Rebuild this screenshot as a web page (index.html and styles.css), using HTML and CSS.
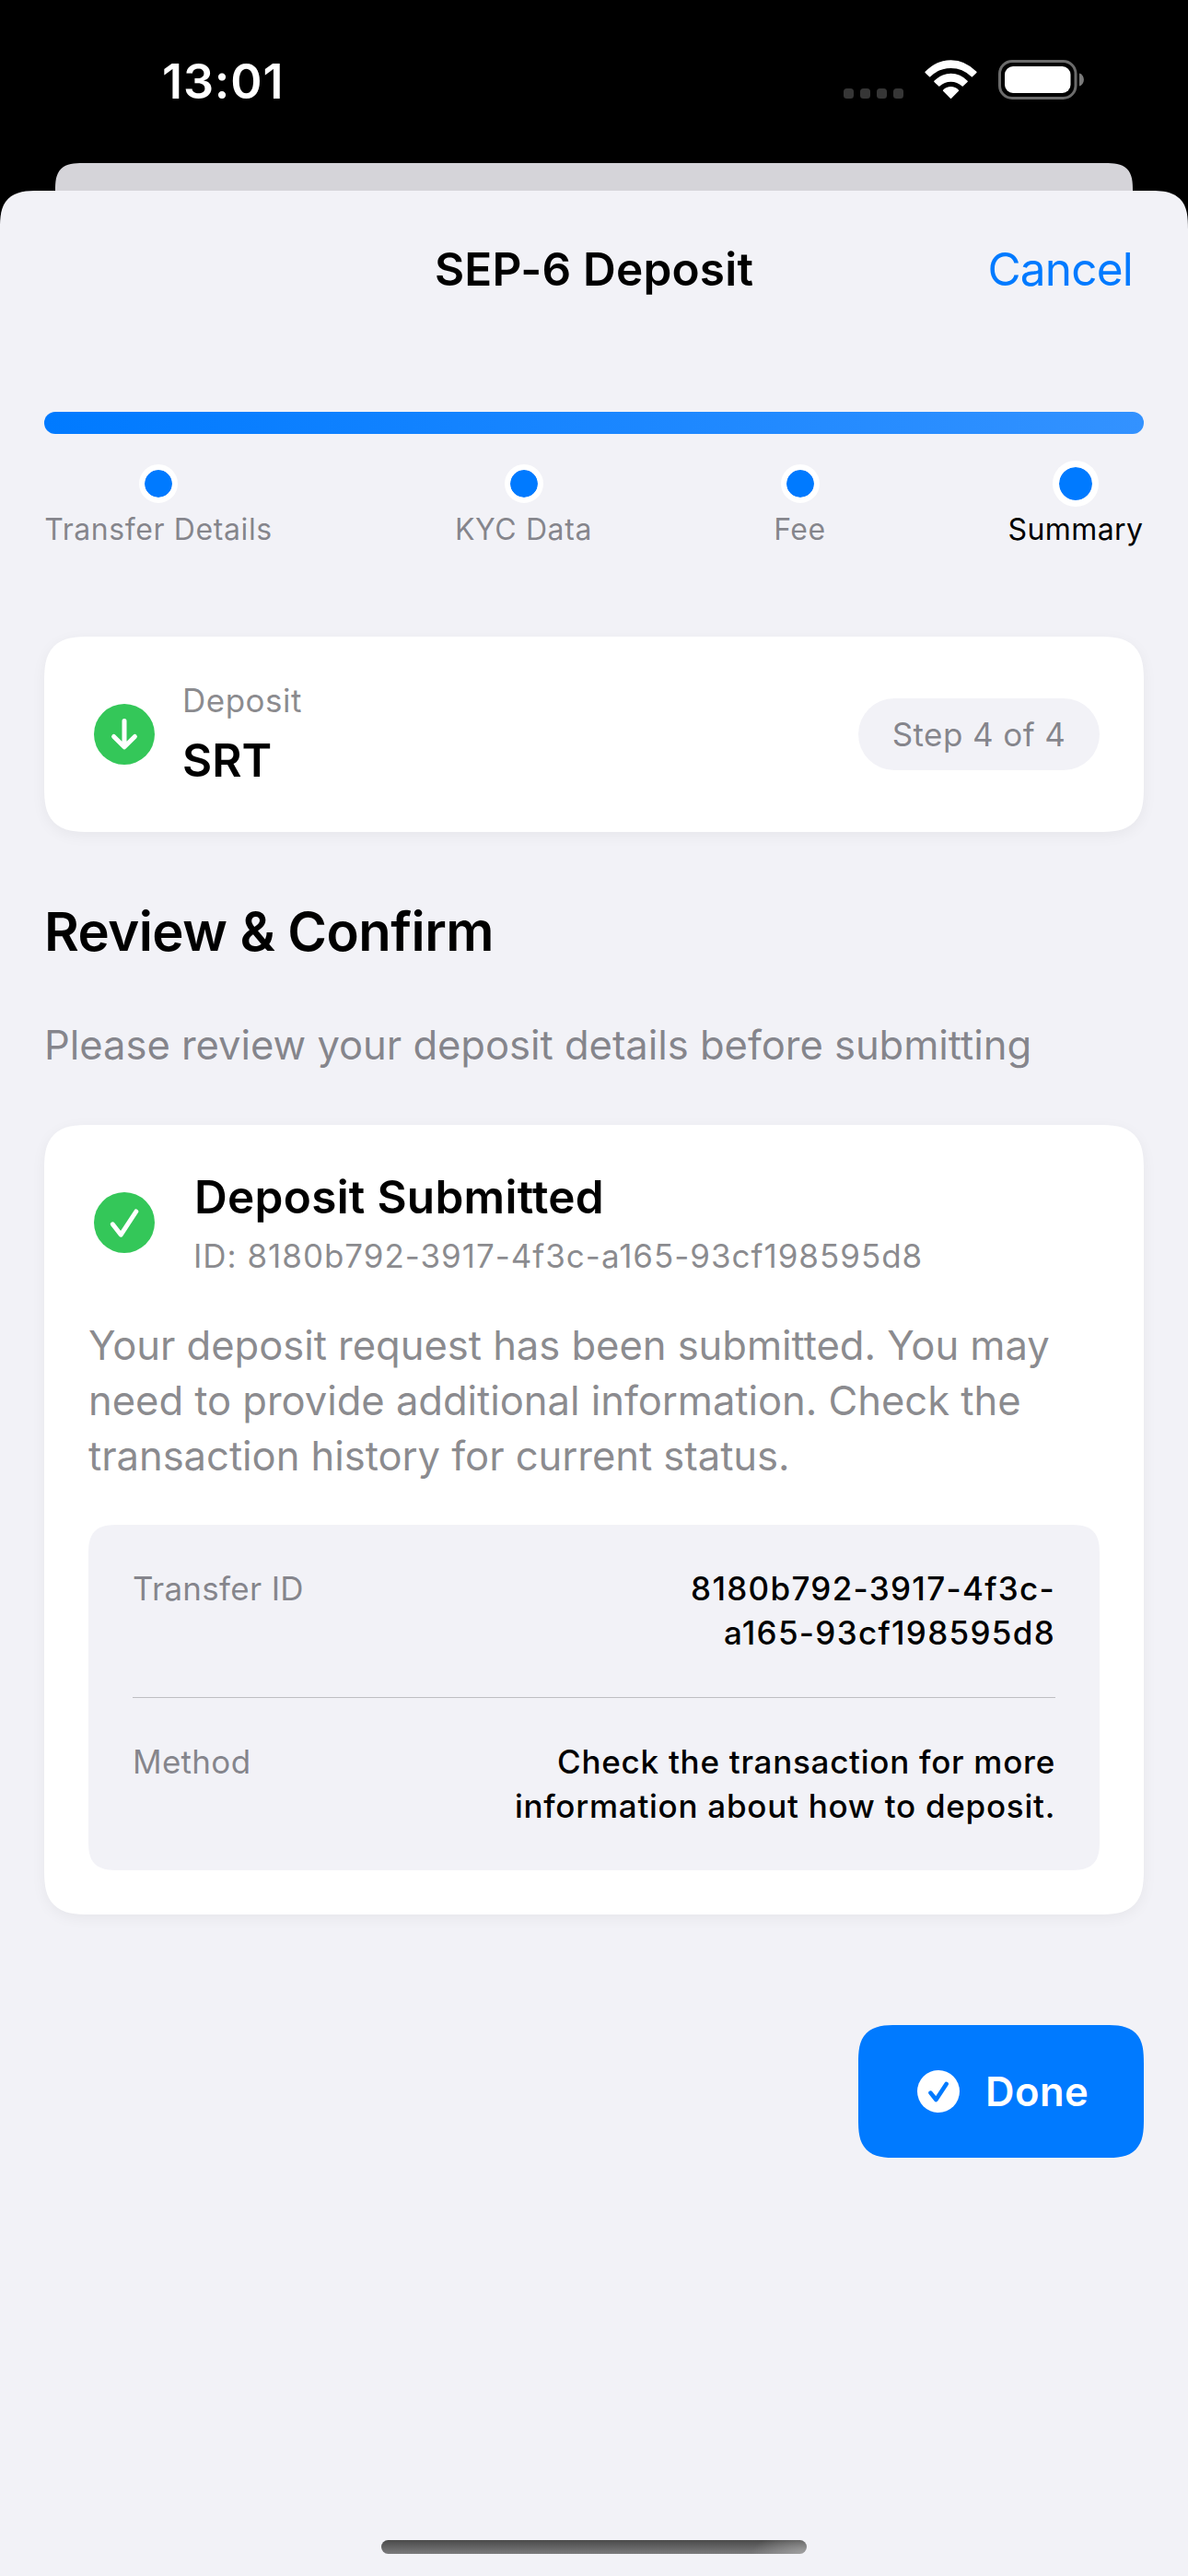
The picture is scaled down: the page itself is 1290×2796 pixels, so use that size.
FILE: index.html
```html
<!DOCTYPE html>
<html lang="en">
<head>
<meta charset="utf-8">
<title>SEP-6 Deposit</title>
<link rel="stylesheet" href="styles.css">
</head>
<body>
<div class="screen">
  <header class="status-bar">
    <span class="clock">13:01</span>
    <div class="status-icons">
      <svg class="signal" width="65" height="11" viewBox="0 0 65 11" fill="#363636">
        <rect width="11" height="11" rx="3.5"/><rect x="18" width="11" height="11" rx="3.5"/><rect x="36" width="11" height="11" rx="3.5"/><rect x="54" width="11" height="11" rx="3.5"/>
      </svg>
      <svg class="wifi" width="58" height="43" viewBox="0 0 58 43" fill="#fff" stroke="#fff" stroke-width="1.6" stroke-linejoin="round">
        <path d="M1.2 13.4C17 -3.2 40 -3.2 55.8 13.4L51.4 17.6C38.4 5 18.6 5 5.6 17.6Z"/>
        <path d="M11 23.4C21 13 36 13 46 23.4L41.2 28C34 21.200 23 21.200 15.800 28Z"/>
        <path d="M20.600 33.200C25 28.600 32 28.600 36.400 33.200L28.500 41.200Z"/>
      </svg>
      <svg class="battery" width="94" height="43" viewBox="0 0 94 43">
        <rect x="1.500" y="1.500" width="82.500" height="40" rx="13.500" fill="none" stroke="#6b6b6b" stroke-width="3"/>
        <rect x="7" y="7" width="71.500" height="29" rx="9" fill="#fff"/>
        <path d="M88 14.500C94.500 16.500 94.500 26.500 88 28.500Z" fill="#7a7a7a"/>
      </svg>
    </div>
  </header>
  <div class="back-sheet"></div>
  <main class="sheet">
    <nav class="nav-bar">
      <h1 class="nav-title">SEP-6 Deposit</h1>
      <a class="cancel">Cancel</a>
    </nav>
    <div class="content">
      <div class="progress"></div>
      <ol class="steps">
        <li class="step"><span class="dot-slot"><i class="dot"></i></span><span class="step-label">Transfer Details</span></li>
        <li class="step"><span class="dot-slot"><i class="dot"></i></span><span class="step-label">KYC Data</span></li>
        <li class="step"><span class="dot-slot"><i class="dot"></i></span><span class="step-label">Fee</span></li>
        <li class="step current"><span class="dot-slot"><i class="dot"></i></span><span class="step-label">Summary</span></li>
      </ol>

      <section class="card asset-card">
        <svg class="icon" width="66" height="66" viewBox="0 0 66 66" fill="none">
          <circle cx="33" cy="33" r="33" fill="#34c759"/>
          <path d="M33 18.500V46.500M21.600 35.500L33 46.800L44.400 35.500" stroke="#fff" stroke-width="5" stroke-linecap="round" stroke-linejoin="round"/>
        </svg>
        <div class="asset">
          <span class="asset-kind">Deposit</span>
          <span class="asset-code">SRT</span>
        </div>
        <span class="step-pill">Step 4 of 4</span>
      </section>

      <h2 class="heading">Review &amp; Confirm</h2>
      <p class="subtitle">Please review your deposit details before submitting</p>

      <section class="card result-card">
        <div class="result-head">
          <svg class="icon" width="66" height="66" viewBox="0 0 66 66" fill="none">
            <circle cx="33" cy="33" r="33" fill="#34c759"/>
            <path d="M20.300 34.800L29.300 46.200L45.800 21" stroke="#fff" stroke-width="5" stroke-linecap="round" stroke-linejoin="round"/>
          </svg>
          <div class="result-titles">
            <h3 class="result-title">Deposit Submitted</h3>
            <span class="result-id">ID: 8180b792-3917-4f3c-a165-93cf198595d8</span>
          </div>
        </div>
        <p class="message">Your deposit request has been submitted. You may need to provide additional information. Check the transaction history for current status.</p>
        <dl class="details">
          <div class="row">
            <dt>Transfer ID</dt>
            <dd class="uuid">8180b792-3917-4f3c-<br>a165-93cf198595d8</dd>
          </div>
          <div class="divider"></div>
          <div class="row">
            <dt>Method</dt>
            <dd>Check the transaction for more information about how to deposit.</dd>
          </div>
        </dl>
      </section>

      <div class="actions">
        <button class="done">
          <svg width="46" height="46" viewBox="0 0 46 46" fill="none">
            <circle cx="23" cy="23" r="23" fill="#fff"/>
            <path d="M14.500 24.600L20.400 32L31.600 15" stroke="#007aff" stroke-width="4.600" stroke-linecap="round" stroke-linejoin="round"/>
          </svg>
          <span>Done</span>
        </button>
      </div>
    </div>
    <div class="home-indicator"></div>
  </main>
</div>
</body>
</html>
```
FILE: styles.css
```css
:root {
  --bg: #f2f2f7;
  --blue: #007aff;
  --secondary: rgba(60, 60, 67, 0.6);
}

* { box-sizing: border-box; margin: 0; padding: 0; }

body {
  background: #000;
  font-family: Inter, "Liberation Sans", sans-serif;
  color: #000;
}

.screen {
  width: 1290px;
  height: 2796px;
  display: flex;
  flex-direction: column;
  overflow: hidden;
}

/* Status bar */
.status-bar {
  height: 177px;
  padding: 0 113px 0 176px;
  display: flex;
  justify-content: space-between;
  align-items: flex-start;
}
.clock {
  margin-top: 59px;
  font-size: 52px;
  line-height: 60px;
  font-weight: 600;
  letter-spacing: 0.89px;
  color: #fff;
}
.status-icons {
  margin-top: 65px;
  height: 43px;
  width: 261px;
  display: flex;
  align-items: flex-start;
}
.status-icons svg { flex: none; }
.signal { margin: 31px 23px 0 0; }
.wifi { margin-right: 22px; }

/* Stacked sheets */
.back-sheet {
  height: 30px;
  margin: 0 60px;
  background: #d5d4d9;
  border-radius: 30px 30px 0 0;
}
.sheet {
  flex: 1;
  display: flex;
  flex-direction: column;
  background: var(--bg);
  border-radius: 30px 30px 0 0;
}

.nav-bar {
  height: 170px;
  padding: 0 60px;
  display: grid;
  grid-template-columns: 1fr auto 1fr;
  align-items: center;
}
.nav-title {
  grid-column: 2;
  font-size: 49.5px;
  line-height: 60px;
  font-weight: 600;
  letter-spacing: 0.21px;
}
.cancel {
  justify-self: end;
  font-size: 49.5px;
  line-height: 60px;
  letter-spacing: -0.8px;
  color: var(--blue);
}

.content {
  flex: 1;
  padding: 70px 48px 0;
}

/* Progress */
.progress {
  height: 24px;
  border-radius: 12px;
  background: linear-gradient(90deg, var(--blue), #3392ff);
}
.steps {
  list-style: none;
  margin-top: 29px;
  display: grid;
  grid-template-columns: 248px 149px 55px 148px;
  justify-content: space-between;
}
.step {
  display: flex;
  flex-direction: column;
  align-items: center;
  gap: 5px;
}
.dot-slot {
  height: 50px;
  display: flex;
  align-items: center;
}
.dot {
  width: 42px;
  height: 42px;
  border: 6px solid #fff;
  border-radius: 50%;
  background: var(--blue);
  background-clip: padding-box;
}
.step-label {
  font-size: 32px;
  line-height: 40px;
  letter-spacing: 0.6px;
  white-space: nowrap;
  color: var(--secondary);
}
.current .dot { width: 50px; height: 50px; border-width: 7px; }
.current .step-label { color: #000; letter-spacing: 0.4px; }

/* Cards */
.card {
  background: #fff;
  border-radius: 36px;
  box-shadow: 0 4px 16px rgba(0, 0, 0, 0.05);
}
.icon { flex: none; }

.asset-card {
  height: 212px;
  margin-top: 96px;
  padding: 0 48px 0 54px;
  display: flex;
  align-items: center;
}
.asset {
  margin-left: 30px;
  flex: 1;
  display: flex;
  flex-direction: column;
  gap: 10px;
}
.asset-kind {
  font-size: 35px;
  line-height: 46px;
  letter-spacing: 0.5px;
  color: var(--secondary);
}
.asset-code {
  font-size: 49.5px;
  line-height: 64px;
  font-weight: 600;
}
.step-pill {
  width: 262px;
  height: 78px;
  border-radius: 39px;
  background: var(--bg);
  font-size: 35px;
  line-height: 78px;
  letter-spacing: 0.4px;
  text-align: center;
  color: var(--secondary);
}

.heading {
  margin-top: 72px;
  font-size: 58px;
  line-height: 72px;
  font-weight: 600;
  letter-spacing: -0.55px;
}
.subtitle {
  margin-top: 58px;
  font-size: 43.6px;
  line-height: 60px;
  letter-spacing: -0.06px;
  color: var(--secondary);
}

.result-card {
  margin-top: 56px;
  padding: 48px;
}
.result-head {
  padding-left: 6px;
  display: flex;
  align-items: center;
  gap: 42px;
}
.result-head .icon { margin-bottom: 2px; }
.result-titles {
  display: flex;
  flex-direction: column;
  gap: 10px;
}
.result-title {
  margin-left: 1px;
  font-size: 49.5px;
  line-height: 60px;
  font-weight: 600;
  letter-spacing: 0.28px;
}
.result-id {
  font-size: 35px;
  line-height: 48px;
  letter-spacing: 0.97px;
  color: var(--secondary);
}
.message {
  margin-top: 44px;
  font-size: 43.6px;
  line-height: 60px;
  letter-spacing: -0.06px;
  color: var(--secondary);
}

.details {
  margin-top: 44px;
  padding: 45px 48px 46px;
  border-radius: 24px;
  background: var(--bg);
  font-size: 35px;
  line-height: 48px;
}
.row {
  display: flex;
  justify-content: space-between;
}
.row dt { letter-spacing: 0.3px; color: var(--secondary); }
.row dd {
  max-width: 640px;
  font-weight: 500;
  letter-spacing: 0.74px;
  text-align: right;
}
.row .uuid { letter-spacing: 1.3px; }
.divider {
  height: 1px;
  margin: 46px 0 45px;
  background: #bebec2;
}

/* Actions */
.actions {
  margin-top: 120px;
  display: flex;
  justify-content: flex-end;
}
.done {
  width: 310px;
  height: 144px;
  padding-left: 64px;
  display: flex;
  align-items: center;
  gap: 28px;
  border: 0;
  border-radius: 30px;
  background: var(--blue);
  font: 600 43.6px/60px Inter, "Liberation Sans", sans-serif;
  letter-spacing: 0.43px;
  color: #fff;
}
.done span { padding-top: 1px; }

.home-indicator {
  width: 462px;
  height: 15px;
  margin: 0 auto 24px;
  border-radius: 7.5px;
  background:
    radial-gradient(60px 24px at 100% 100%, rgba(180, 180, 180, 0.7), transparent),
    linear-gradient(#4a4a4a, #7b7b7d);
}

/* Continuous corners where the browser can draw them */
@supports (corner-shape: superellipse(1.5)) {
  .sheet, .back-sheet, .card, .details, .done { corner-shape: superellipse(1.55); }
  .sheet, .back-sheet { border-radius: 42px 42px 0 0; }
  .card { border-radius: 50px; }
  .details { border-radius: 33px; }
  .done { border-radius: 42px; }
}
```
